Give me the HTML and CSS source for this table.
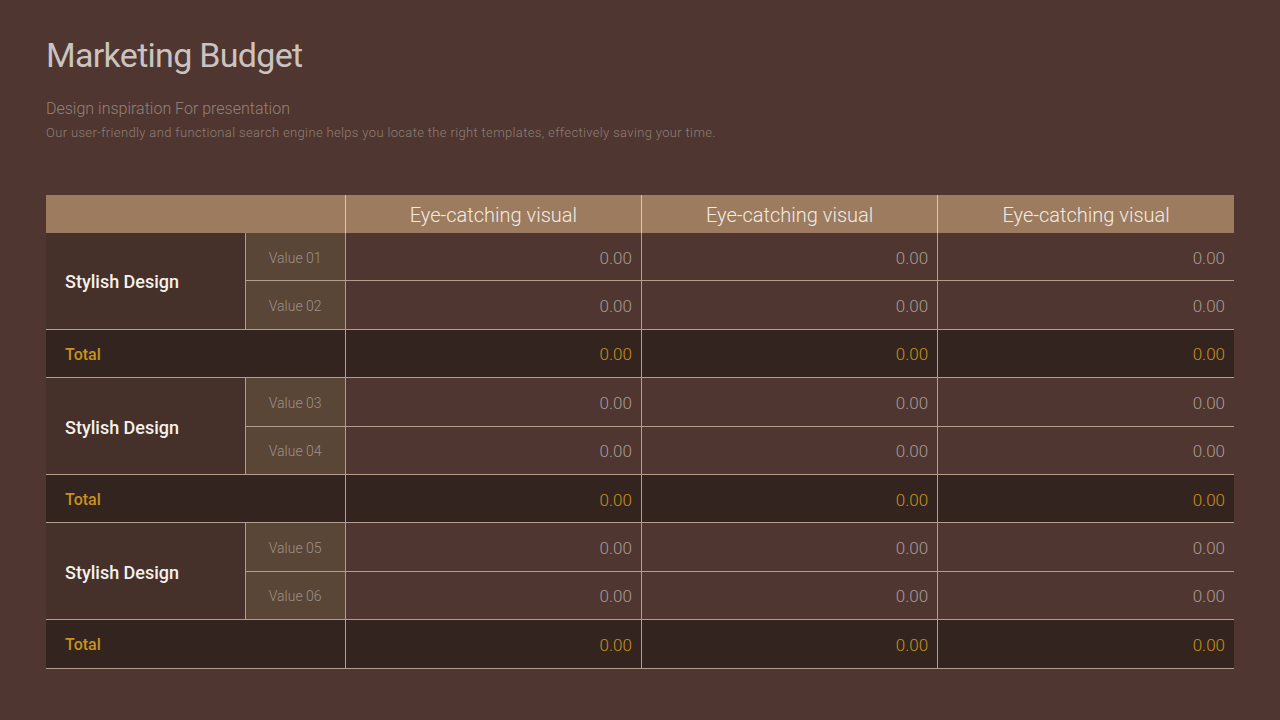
FILE: index.html
```html
<!DOCTYPE html>
<html lang="en">
<head>
    <meta charset="UTF-8">
    <title>Marketing Budget</title>
    <link rel="stylesheet" href="styles.css">
</head>
<body>
    <div class="slide">
        <h1>Marketing Budget</h1>
        <div class="sub">Design inspiration For presentation</div>
        <div class="desc">Our user-friendly and functional search engine helps you locate the right templates, effectively saving your time.</div>

        <table class="budget">
            <colgroup>
                <col class="c-name">
                <col class="c-val">
                <col class="c-num">
                <col class="c-num">
                <col class="c-num">
            </colgroup>
            <thead>
                <tr>
                    <th colspan="2" class="blank"></th>
                    <th>Eye-catching visual</th>
                    <th>Eye-catching visual</th>
                    <th>Eye-catching visual</th>
                </tr>
            </thead>
            <tbody>
                <tr>
                    <td rowspan="2" class="name">Stylish Design</td>
                    <td class="label">Value 01</td>
                    <td class="num">0.00</td><td class="num">0.00</td><td class="num">0.00</td>
                </tr>
                <tr>
                    <td class="label">Value 02</td>
                    <td class="num">0.00</td><td class="num">0.00</td><td class="num">0.00</td>
                </tr>
                <tr class="total">
                    <td colspan="2">Total</td>
                    <td class="num">0.00</td><td class="num">0.00</td><td class="num">0.00</td>
                </tr>
                <tr>
                    <td rowspan="2" class="name">Stylish Design</td>
                    <td class="label">Value 03</td>
                    <td class="num">0.00</td><td class="num">0.00</td><td class="num">0.00</td>
                </tr>
                <tr>
                    <td class="label">Value 04</td>
                    <td class="num">0.00</td><td class="num">0.00</td><td class="num">0.00</td>
                </tr>
                <tr class="total">
                    <td colspan="2">Total</td>
                    <td class="num">0.00</td><td class="num">0.00</td><td class="num">0.00</td>
                </tr>
                <tr>
                    <td rowspan="2" class="name">Stylish Design</td>
                    <td class="label">Value 05</td>
                    <td class="num">0.00</td><td class="num">0.00</td><td class="num">0.00</td>
                </tr>
                <tr>
                    <td class="label">Value 06</td>
                    <td class="num">0.00</td><td class="num">0.00</td><td class="num">0.00</td>
                </tr>
                <tr class="total">
                    <td colspan="2">Total</td>
                    <td class="num">0.00</td><td class="num">0.00</td><td class="num">0.00</td>
                </tr>
            </tbody>
        </table>
    </div>
</body>
</html>
```

FILE: styles.css
```css
body {
    margin: 0;
    background-color: #4f3630;
    font-family: Roboto, "Liberation Sans", sans-serif;
    width: 1280px;
    height: 720px;
    overflow: hidden;
}
.slide {
    padding: 35px 46px 0 46px;
}
h1 {
    margin: 0;
    font-size: 34px;
    font-weight: 400;
    color: #cbc3c0;
    letter-spacing: -0.7px;
    line-height: 40px;
}
.sub {
    margin-top: 24px;
    font-size: 16px;
    font-weight: 300;
    color: #948279;
    line-height: 20px;
}
.desc {
    margin-top: 5px;
    font-size: 13px;
    font-weight: 300;
    color: #8f7e76;
    line-height: 18px;
    letter-spacing: 0.35px;
}
.budget {
    margin-top: 53px;
    width: 1188px;
    border-collapse: collapse;
    table-layout: fixed;
}
.c-name { width: 199px; }
.c-val { width: 100px; }
.c-num { width: 296px; }
.budget th {
    height: 36px;
    padding: 2px 0 0 0;
    background-color: #9c7b5f;
    color: #f3ebe4;
    font-size: 20px;
    font-weight: 300;
    border-left: 1px solid #d8c6b6;
}
.budget th.blank {
    border-left: none;
}
.budget td {
    height: 45.4px;
    padding: 2px 18px 0 18px;
    border-top: 1px solid #b39d8c;
    border-left: 1px solid #b39d8c;
    color: #a99b94;
    font-size: 17px;
    font-weight: 300;
}
.budget tbody tr:first-child td {
    border-top: none;
}
.budget tbody tr:last-child td {
    border-bottom: 1px solid #b39d8c;
}
.budget td.name {
    border-left: none;
    background-color: #45302a;
    color: #f6f0ea;
    font-size: 18px;
    font-weight: 500;
    padding-left: 19px;
}
.budget td.label {
    background-color: #5a4637;
    color: #9e9088;
    font-size: 14px;
    text-align: center;
}
.budget td.num {
    text-align: right;
    padding-right: 9px;
}
.total td {
    background-color: #33241f;
    color: #c8921e;
}
.total td:first-child {
    border-left: none;
    font-weight: 500;
    font-size: 16px;
    padding-left: 19px;
}
```
